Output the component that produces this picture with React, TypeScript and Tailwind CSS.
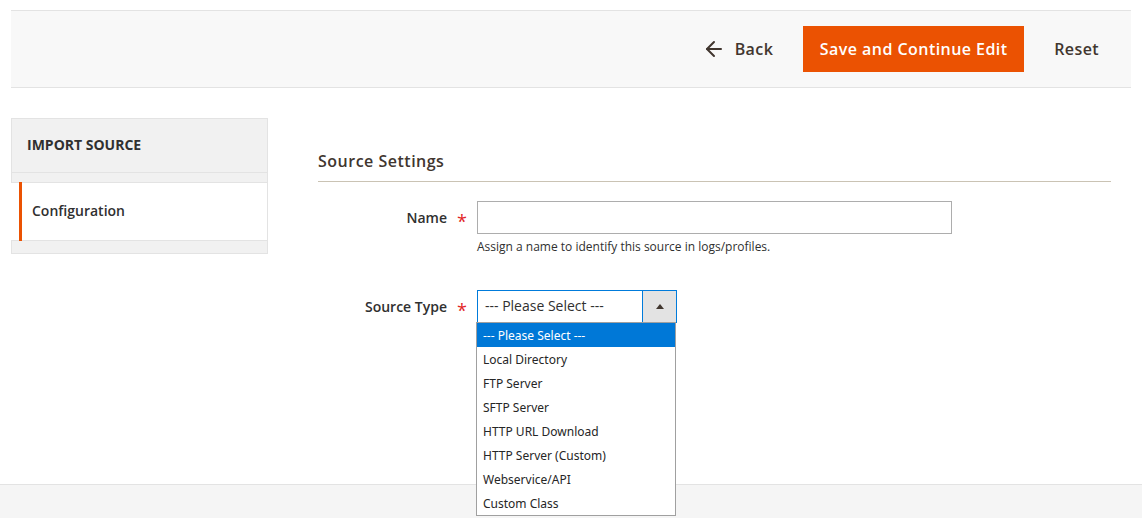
import { ArrowLeft } from "lucide-react";

const OPTIONS = ["--- Please Select ---", "Local Directory", "FTP Server", "SFTP Server", "HTTP URL Download", "HTTP Server (Custom)", "Webservice/API", "Custom Class"];

function Required() {
  return <span className="w-[20px] ml-[10px] text-[#e22626] text-[18px] leading-none font-normal translate-y-[3px]">*</span>;
}

export default function App() {
  return (
    <div className="h-[526px] flex flex-col bg-white overflow-hidden text-[#303030] font-['Open_Sans',sans-serif]">
      <div className="h-[10px] shrink-0" />
      <div className="mx-[11px] h-[78px] shrink-0 flex items-center justify-end bg-[#f8f8f8] border-y border-[#e3e3e3] pr-[32px]">
        <button className="flex items-center text-[16px] font-semibold tracking-[0.4px] text-[#41362f] mr-[30px]">
          <ArrowLeft className="w-[24px] h-[24px] mr-[9px]" strokeWidth={2} />
          Back
        </button>
        <button className="w-[221px] h-[46px] bg-[#eb5202] text-white text-[16px] font-semibold tracking-[0.45px]">Save and Continue Edit</button>
        <button className="text-[16px] font-semibold tracking-[0.4px] text-[#41362f] ml-[30px]">Reset</button>
      </div>

      <div className="flex flex-1 min-h-0">
        <div className="w-[257px] ml-[11px] mt-[30px] shrink-0 self-start bg-[#f1f1f1] border border-[#e3e3e3]">
          <div className="h-[54px] flex items-center pl-[15px] pb-[2px] border-b border-[#e3e3e3] text-[14px] font-bold">IMPORT SOURCE</div>
          <div className="h-[9px]" />
          <div className="h-[59px] -ml-px bg-white border-y border-[#e3e3e3] flex">
            <div className="w-[3px] ml-[8px] -my-px bg-[#eb5202]" />
            <span className="self-center ml-[10px] pb-[2px] text-[14px] font-semibold">Configuration</span>
          </div>
          <div className="h-[12px]" />
        </div>

        <div className="ml-[50px] w-[793px] pt-[61px] shrink-0">
          <div className="h-[33px] border-b border-[#cac3b4] text-[16px] font-semibold tracking-[0.5px] text-[#41362f] leading-[24px]">Source Settings</div>

          <div className="flex mt-[19px]">
            <div className="w-[159px] h-[33px] flex items-center justify-end text-[14px] font-semibold">
              Name
              <Required />
            </div>
            <div>
              <input className="block w-[475px] h-[33px] bg-white border border-[#adadad]" />
              <p className="text-[12px] leading-[18px] mt-[4px]">Assign a name to identify this source in logs/profiles.</p>
            </div>
          </div>

          <div className="flex mt-[34px]">
            <div className="w-[159px] h-[33px] flex items-center justify-end text-[14px] font-semibold">
              Source Type
              <Required />
            </div>
            <div className="relative">
              <div className="w-[200px] h-[33px] flex border border-[#007bdb] bg-white">
                <span className="flex-1 pl-[7px] text-[14px] leading-[30px]">--- Please Select ---</span>
                <span className="w-[34px] bg-[#e3e3e3] border-l border-[#007bdb] flex items-center justify-center">
                  <span className="w-0 h-0 border-x-[4px] border-x-transparent border-b-[5px] border-b-[#41362f]" />
                </span>
              </div>
              <ul className="absolute z-10 -left-px top-[32px] w-[200px] bg-white border border-[#a0a0a0] font-['Noto_Sans',sans-serif] text-[12px]">
                {OPTIONS.map((o, i) => (
                  <li key={o} className={`h-[24px] leading-[25px] pl-[6px] ${i === 0 ? "bg-[#0078d7] text-white" : "text-[#262626]"}`}>{o}</li>
                ))}
              </ul>
            </div>
          </div>
        </div>
      </div>

      <div className="h-[34px] shrink-0 bg-[#f5f5f5] border-t border-[#e3e3e3]" />
      <div className="h-[8px] shrink-0" />
    </div>
  );
}
